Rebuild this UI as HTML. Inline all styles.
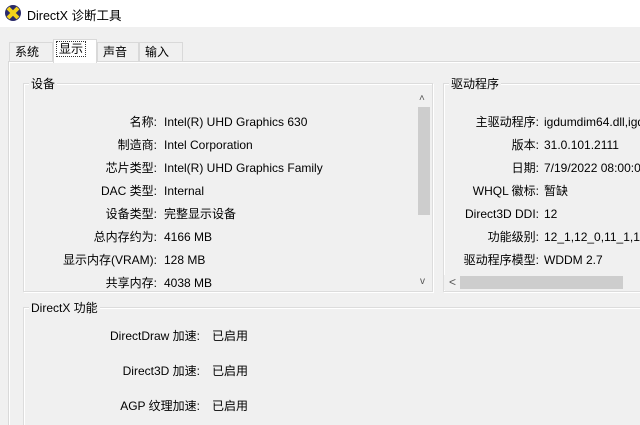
<!DOCTYPE html>
<html style="overflow:hidden;width:640px;height:425px"><head><meta charset="utf-8"><style>
*{margin:0;padding:0;box-sizing:border-box}
body{width:640px;height:425px;overflow:hidden;background:#f0f0f0;font-family:"Liberation Sans","Noto Sans CJK SC",sans-serif;font-size:12px;color:#000;position:relative}
.a{position:absolute;white-space:nowrap}
.title{left:0;top:0;width:640px;height:27px;background:#fff}
.tab{position:absolute;top:42px;height:20px;border:1px solid #d9d9d9;border-bottom:none;background:#f0f0f0;line-height:18px;padding-left:5px}
.panel{position:absolute;left:8px;top:61px;width:632px;height:364px;border-left:1px solid #d9d9d9;border-top:1px solid #d9d9d9;box-shadow:inset 1px 1px 0 #fff}
.grp{position:absolute;border:1px solid #dcdcdc;box-shadow:inset 1px 1px 0 #fff,1px 1px 0 #fff}
.gl{position:absolute;background:#f0f0f0;padding:0 2px;top:-9px;left:5px}
.r{text-align:right}
</style></head><body>
<div class="a title"></div>
<svg class="a" style="left:4px;top:4px" width="18" height="18" viewBox="0 0 18 18"><circle cx="9" cy="9" r="8" fill="#2a2a6a"/><path d="M4 4L14 14M14 4L4 14" stroke="#f3d21c" stroke-width="4"/></svg>
<div class="a" style="left:27px;top:5px;font-size:12.5px">DirectX 诊断工具</div>
<div class="tab" style="left:9px;width:44px">系统</div>
<div class="tab" style="left:97px;width:42px">声音</div>
<div class="tab" style="left:139px;width:44px">输入</div>
<div class="panel"></div>
<div class="tab" style="left:53px;top:39px;height:24px;width:44px;background:#fff;border-color:#d9d9d9"><span style="border:1px dotted #333;padding:0 2px;margin-left:-3px">显示</span></div>

<div class="grp" style="left:23px;top:83px;width:410px;height:209px"><span class="gl">设备</span></div>
<div class="a" style="left:417px;top:90px;width:14px;height:200px;background:#f0f0f0"></div>
<div class="a" style="left:418px;top:107px;width:12px;height:108px;background:#cdcdcd"></div>
<div class="a" style="left:419px;top:93px;font-size:10px;color:#555">˄</div>
<div class="a" style="left:420px;top:276px;font-size:10px;color:#555">v</div>

<div class="a r" style="right:483px;top:111px;line-height:23px">名称:<br>制造商:<br>芯片类型:<br>DAC 类型:<br>设备类型:<br>总内存约为:<br>显示内存(VRAM):<br>共享内存:</div>
<div class="a" style="left:164px;top:111px;line-height:23px">Intel(R) UHD Graphics 630<br>Intel Corporation<br>Intel(R) UHD Graphics Family<br>Internal<br>完整显示设备<br>4166 MB<br>128 MB<br>4038 MB</div>

<div class="grp" style="left:443px;top:83px;width:205px;height:209px"><span class="gl">驱动程序</span></div>
<div class="a r" style="right:101px;top:111px;line-height:23px">主驱动程序:<br>版本:<br>日期:<br>WHQL 徽标:<br>Direct3D DDI:<br>功能级别:<br>驱动程序模型:</div>
<div class="a" style="left:544px;top:111px;line-height:23px">igdumdim64.dll,igd<br>31.0.101.2111<br>7/19/2022 08:00:00<br>暂缺<br>12<br>12_1,12_0,11_1,11_<br>WDDM 2.7</div>
<div class="a" style="left:444px;top:275px;width:196px;height:15px;background:#f0f0f0"></div>
<div class="a" style="left:460px;top:276px;width:163px;height:13px;background:#cdcdcd"></div>
<div class="a" style="left:449px;top:275px;font-size:12px;color:#555">&lt;</div>

<div class="grp" style="left:23px;top:307px;width:625px;height:125px"><span class="gl">DirectX 功能</span></div>
<div class="a r" style="right:440px;top:319px;line-height:35px">DirectDraw 加速:<br>Direct3D 加速:<br>AGP 纹理加速:</div>
<div class="a" style="left:212px;top:319px;line-height:35px">已启用<br>已启用<br>已启用</div>
</body></html>
